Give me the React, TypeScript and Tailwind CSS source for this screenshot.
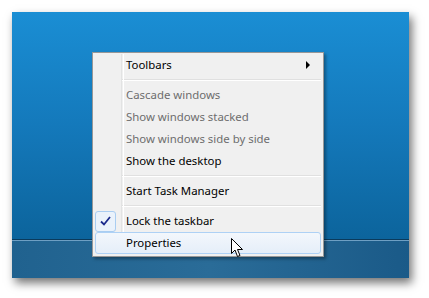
import React from "react";

type Item = { label: string; disabled?: boolean; checked?: boolean; submenu?: boolean; hover?: boolean };

const groups: Item[][] = [
  [{ label: "Toolbars", submenu: true }],
  [
    { label: "Cascade windows", disabled: true },
    { label: "Show windows stacked", disabled: true },
    { label: "Show windows side by side", disabled: true },
    { label: "Show the desktop" },
  ],
  [{ label: "Start Task Manager" }],
  [{ label: "Lock the taskbar", checked: true }, { label: "Properties", hover: true }],
];

function Cursor() {
  return (
    <svg width="13" height="20" viewBox="0 0 13 20" className="absolute left-[219px] top-[226px]">
      <path
        d="M0.5 0.5 L0.5 15.5 L4 12 L6.5 18.5 L9 17.5 L6.5 11.5 L11.5 11.5 Z"
        fill="#fff"
        stroke="#000"
        strokeWidth="1"
        strokeLinejoin="miter"
      />
    </svg>
  );
}

function MenuRow({ item }: { item: Item }) {
  return (
    <div
      className={`relative flex h-[22px] items-center rounded-[3px] border ${
        item.hover
          ? "border-[#aed1f5] bg-gradient-to-b from-[#f3f7fc] to-[#e5eef9]"
          : "border-transparent"
      }`}
    >
      <div className="flex h-full w-[27px] shrink-0 items-center">
        {item.checked && (
          <div className="ml-[-1px] flex h-[21px] w-[21px] items-center justify-center rounded-[3px] border border-[#a9cdf1] bg-[#eaf2fb]">
            <svg width="11" height="10" viewBox="0 0 11 10">
              <path d="M1 5.5 L4 8.5 L10 1" fill="none" stroke="#1b2a8c" strokeWidth="1.8" />
            </svg>
          </div>
        )}
      </div>
      <span
        className={`ml-[3px] flex-1 text-[11.4px] leading-none ${
          item.disabled ? "text-[#6d6d6d]" : "text-black"
        }`}
      >
        {item.label}
      </span>
      {item.submenu && (
        <svg width="5" height="8" viewBox="0 0 5 8" className="mr-[9px]">
          <path d="M0 0 L4 4 L0 8 Z" fill="#000" />
        </svg>
      )}
    </div>
  );
}

export default function App() {
  return (
    <div
      className="h-[298px] w-[429px] bg-white p-[12px]"
      style={{ fontFamily: '"Noto Sans", "Open Sans", sans-serif' }}
    >
      <div className="relative flex h-[266px] w-[397px] flex-col shadow-[3px_5px_9px_rgba(0,0,0,0.55)]">
        {/* desktop */}
        <div className="flex-1 bg-gradient-to-b from-[#1a8ed4] via-[#1479bb] to-[#0c649c]" />
        {/* taskbar */}
        <div className="h-[39px] border-t border-[#0a3a5c] bg-gradient-to-r from-[#20628f] via-[#2a6c98] to-[#1a5a88] shadow-[inset_0_1px_0_#6e9fc3]" />

        {/* context menu */}
        <div className="absolute left-[80px] top-[40px] w-[232px] border border-[#979797] bg-[#f0f0f0] p-[2px] pt-[1px] shadow-[2px_2px_3px_rgba(0,0,0,0.35)]">
          <div className="pointer-events-none absolute bottom-[2px] left-[28px] top-[1px] w-[2px] border-l border-[#e2e3e3] shadow-[1px_0_0_#ffffff]" />
          {groups.map((g, gi) => (
            <div key={gi}>
              {gi > 0 && (
                <div className="flex h-[8px] items-center pl-[27px]">
                  <div className="h-[2px] w-full border-t border-[#e0e0e0] bg-white" />
                </div>
              )}
              {g.map((it) => (
                <MenuRow key={it.label} item={it} />
              ))}
            </div>
          ))}
        </div>
        <Cursor />
      </div>
    </div>
  );
}
